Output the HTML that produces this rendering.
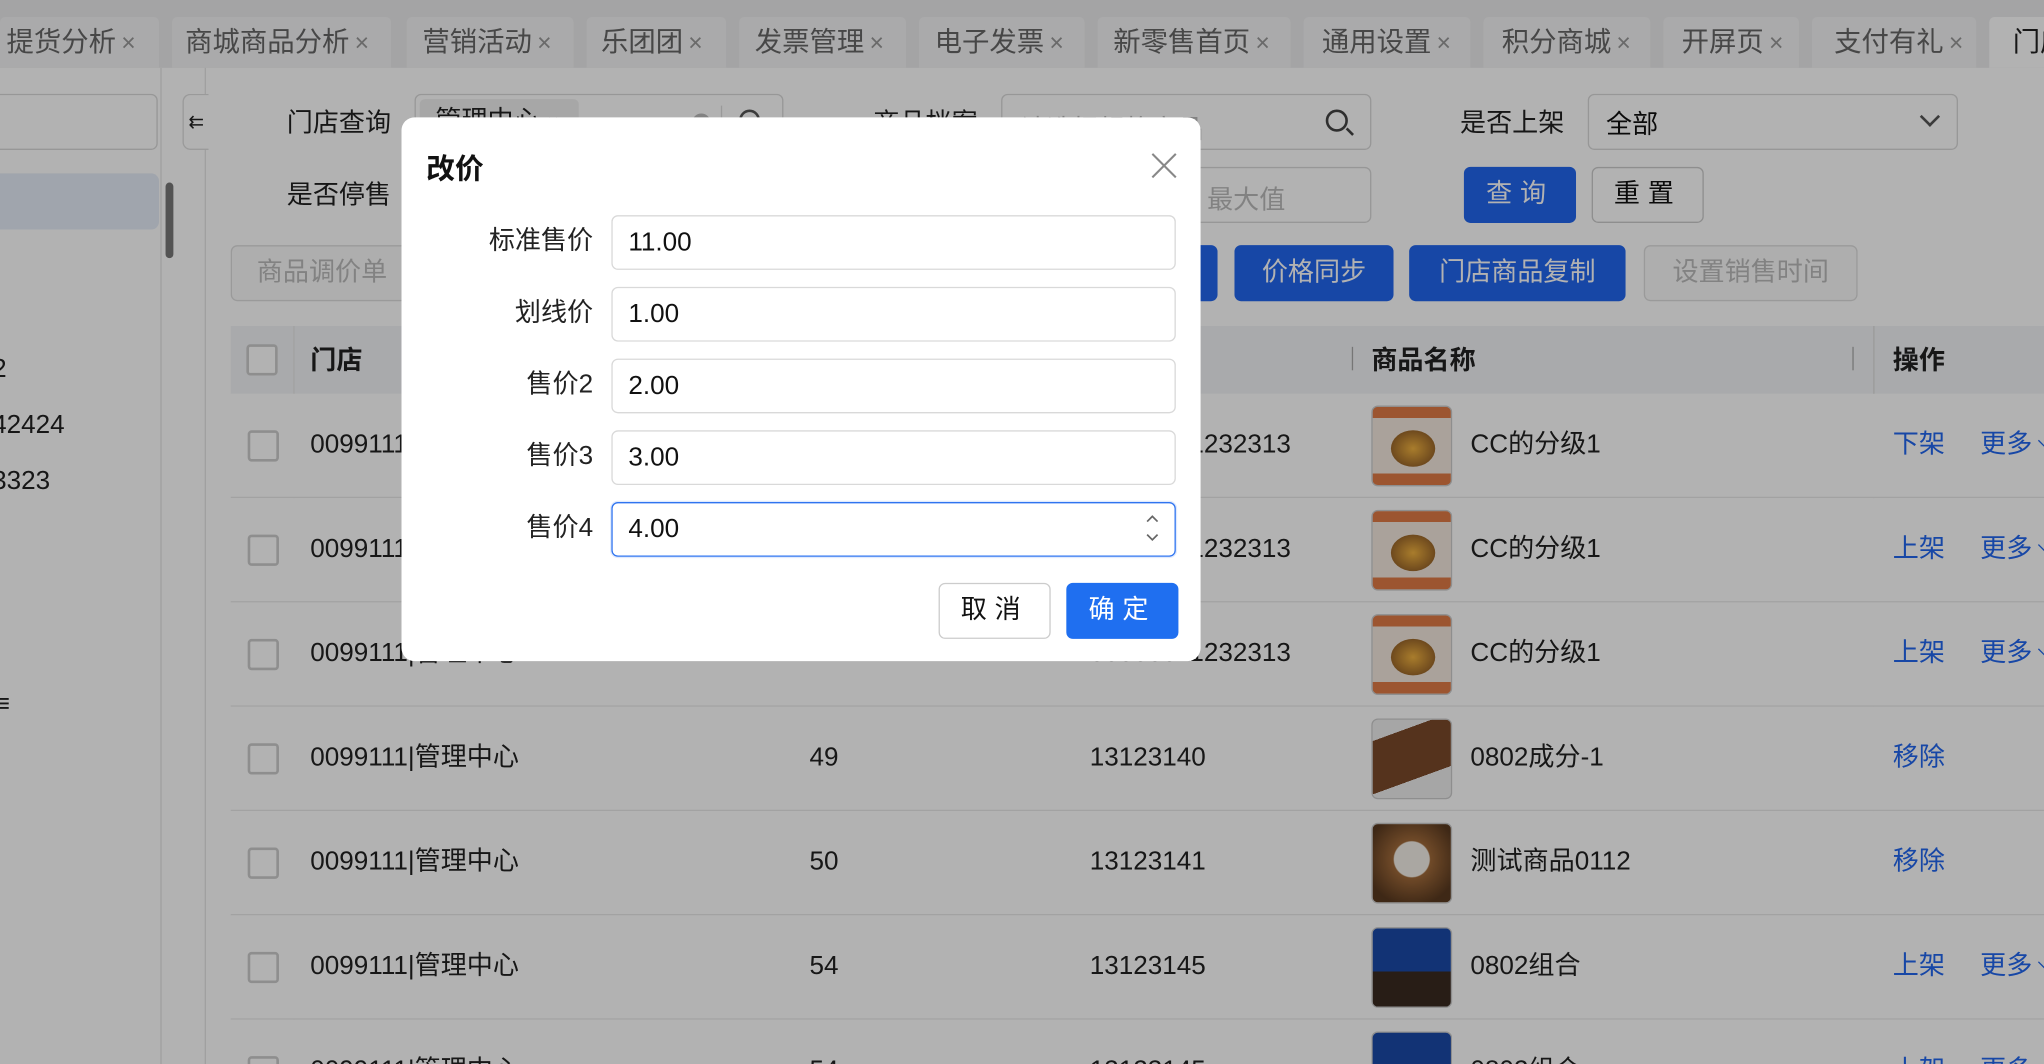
<!DOCTYPE html>
<html><head><meta charset="utf-8"><style>
*{box-sizing:border-box;margin:0;padding:0}
html,body{width:2044px;height:1064px;overflow:hidden;background:#fff;position:relative}
body{font-family:"Liberation Sans","Noto Sans CJK SC",sans-serif;color:#222}
#c{position:absolute;left:0;top:0;width:2044px;height:1064px;overflow:hidden}
#w{position:absolute;left:0;top:0;width:1568px;height:816px;transform:scale(1.30357,1.30392);transform-origin:0 0;background:#fff;overflow:hidden;font-size:20px}
.a{position:absolute;white-space:nowrap}
.tab{position:absolute;top:13px;height:39px;background:#f4f4f5;border-radius:4px 4px 0 0;color:#666;font-size:21px;line-height:39px;padding-left:6px}
.tab b{font-weight:normal;color:#999;margin-left:4px;font-size:19px}
.inp{position:absolute;border:1px solid #d9d9d9;border-radius:5px;background:#fff}
.lbl{position:absolute;font-size:20px;line-height:20px}
.btn{position:absolute;border-radius:5px;font-size:20px;text-align:center;color:#fff;background:#2266ee}
.row{position:absolute;left:177px;width:1400px;height:80px;border-bottom:1px solid #e8e8e8;background:#fff}
.cb{position:absolute;left:13px;top:28px;width:24px;height:24px;border:2px solid #ccc;border-radius:3px;background:#fff}
.row .a{top:27px;line-height:24px}
.img{position:absolute;left:875px;top:9px;width:62px;height:62px;border-radius:5px;border:1px solid #ccc;overflow:hidden}
.blue{color:#2266ee}
.more::after{content:"";display:inline-block;width:7px;height:7px;border-right:1.5px solid #2266ee;border-bottom:1.5px solid #2266ee;transform:rotate(45deg);margin-left:6px;vertical-align:5px}
#ov{position:absolute;left:0;top:0;width:1568px;height:816px;background:rgba(0,0,0,0.3)}
#m{position:absolute;left:308px;top:90px;width:613px;height:417px;background:#fff;border-radius:10px}
.mi{position:absolute;left:161px;width:433px;height:42px;border:1px solid #d9d9d9;border-radius:5px;font-size:20px;line-height:40px;padding-left:12px;color:#111}
.ml{position:absolute;width:147px;text-align:right;font-size:20px;color:#222;line-height:42px}
</style></head><body><div id="c"><div id="w">
<div class="a" style="left:0;top:0;width:1568px;height:52px;background:#ebebec"></div>
<div class="tab" style="left:0;width:122px;padding-left:5px">提货分析<b>×</b></div>
<div class="tab" style="left:132px;width:168px;padding-left:10px">商城商品分析<b>×</b></div>
<div class="tab" style="left:312px;width:128px;padding-left:12px">营销活动<b>×</b></div>
<div class="tab" style="left:450px;width:107px;padding-left:11px">乐团团<b>×</b></div>
<div class="tab" style="left:567px;width:128px;padding-left:12px">发票管理<b>×</b></div>
<div class="tab" style="left:705px;width:127px;padding-left:12px">电子发票<b>×</b></div>
<div class="tab" style="left:842px;width:148px;padding-left:12px">新零售首页<b>×</b></div>
<div class="tab" style="left:1000px;width:128px;padding-left:14px">通用设置<b>×</b></div>
<div class="tab" style="left:1138px;width:128px;padding-left:14px">积分商城<b>×</b></div>
<div class="tab" style="left:1276px;width:104px;padding-left:14px">开屏页<b>×</b></div>
<div class="tab" style="left:1390px;width:126px;padding-left:17px">支付有礼<b>×</b></div>
<div class="tab" style="left:1526px;width:60px;background:#fff;color:#222;padding-left:18px">门店</div>
<div class="a" style="left:123px;top:52px;width:1px;height:764px;background:#e5e5e5"></div>
<div class="a" style="left:157px;top:52px;width:1px;height:764px;background:#e5e5e5"></div>
<div class="inp" style="left:-10px;top:72px;width:131px;height:43px"></div>
<div class="a" style="left:0;top:133px;width:122px;height:43px;background:#e6ecf8;border-radius:0 6px 6px 0"></div>
<div class="a" style="left:127px;top:140px;width:6px;height:58px;background:#777;border-radius:3px"></div>
<div class="a" style="left:-6px;top:272px;line-height:22px">2</div>
<div class="a" style="left:-6px;top:315px;line-height:22px">42424</div>
<div class="a" style="left:-6px;top:358px;line-height:22px">3323</div>
<div class="a" style="left:-4px;top:529px;line-height:22px">≡</div>
<div class="a" style="left:140px;top:72px;width:20px;height:43px;border:1px solid #ddd;border-right:none;border-radius:6px 0 0 6px;background:#fff;font-size:14px;line-height:40px;text-align:center">⇇</div>
<div class="lbl" style="left:220px;top:85px">门店查询</div>
<div class="inp" style="left:318px;top:72px;width:283px;height:43px"><div class="a" style="left:3px;top:3px;width:122px;height:36px;background:#f0f0f0;border-radius:4px;padding-left:12px;line-height:34px">管理中心 <span style="color:#999;font-size:16px">×</span></div><div class="a" style="left:212px;top:14px;width:14px;height:14px;border-radius:7px;background:#bbb"></div><div class="a" style="left:234px;top:8px;width:1px;height:26px;background:#ddd"></div><div class="a" style="left:248px;top:11px;width:16px;height:16px;border:2px solid #555;border-radius:50%"></div></div>
<div class="lbl" style="left:670px;top:85px">商品档案</div>
<div class="inp" style="left:768px;top:72px;width:284px;height:43px"><div class="a" style="left:14px;top:10px;color:#bbb">请选择规格商品</div><div class="a" style="left:248px;top:11px;width:17px;height:17px;border:2px solid #444;border-radius:50%"></div><div class="a" style="left:263px;top:27px;width:7px;height:2px;background:#444;transform:rotate(45deg)"></div></div>
<div class="lbl" style="left:1120px;top:85px">是否上架</div>
<div class="inp" style="left:1218px;top:72px;width:284px;height:43px"><div class="a" style="left:13px;top:6px;color:#111">全部</div><div class="a" style="left:256px;top:11px;width:11px;height:11px;border-right:2px solid #555;border-bottom:2px solid #555;transform:rotate(45deg)"></div></div>
<div class="lbl" style="left:220px;top:140px">是否停售</div>
<div class="inp" style="left:900px;top:128px;width:152px;height:43px"><div class="a" style="left:25px;top:8px;color:#bbb">最大值</div></div>
<div class="btn" style="left:1123px;top:128px;width:86px;height:43px;line-height:43px;letter-spacing:6px">查询</div>
<div class="btn" style="left:1221px;top:128px;width:86px;height:43px;line-height:41px;background:#fff;color:#111;border:1px solid #ccc;letter-spacing:6px">重置</div>
<div class="btn" style="left:177px;top:188px;width:140px;height:43px;line-height:41px;background:#fafafa;color:#bbb;border:1px solid #ddd">商品调价单</div>
<div class="btn" style="left:900px;top:188px;width:34px;height:43px;border-radius:0 5px 5px 0"></div>
<div class="btn" style="left:947px;top:188px;width:122px;height:43px;line-height:43px">价格同步</div>
<div class="btn" style="left:1081px;top:188px;width:166px;height:43px;line-height:43px">门店商品复制</div>
<div class="btn" style="left:1261px;top:188px;width:164px;height:43px;line-height:41px;background:#fafafa;color:#bbb;border:1px solid #ddd">设置销售时间</div>
<div class="a" style="left:177px;top:250px;width:1400px;height:52px;background:#f3f4f6"></div>
<div class="a" style="left:189px;top:264px;width:24px;height:24px;border:2px solid #ccc;border-radius:3px;background:#fff"></div>
<div class="a" style="left:225px;top:250px;width:1px;height:566px;background:#e8e8e8"></div>
<div class="a" style="left:238px;top:260px;font-weight:bold">门店</div>
<div class="a" style="left:1037px;top:266px;width:1px;height:18px;background:#aaa"></div>
<div class="a" style="left:1052px;top:260px;font-weight:bold">商品名称</div>
<div class="a" style="left:1421px;top:266px;width:1px;height:18px;background:#aaa"></div>
<div class="a" style="left:1437px;top:250px;width:1px;height:566px;background:#ddd"></div>
<div class="a" style="left:1452px;top:260px;font-weight:bold">操作</div>
<div class="row" style="top:302px"><div class="cb"></div><div class="a" style="left:61px">0099111|管理中心</div><div class="a" style="left:444px">47</div><div class="a" style="left:659px">00000011232313</div><div class="img" style="background:linear-gradient(#e07a45 0 14%,#f4e9df 14% 85%,#e07a45 85%)"><div class="a" style="left:14px;top:18px;width:34px;height:28px;border-radius:50%;background:radial-gradient(#f2b340,#7a4a22)"></div></div><div class="a" style="left:951px">CC的分级1</div><div class="a blue" style="left:1275px">下架</div><div class="a blue more" style="left:1342px">更多</div></div>
<div class="row" style="top:382px"><div class="cb"></div><div class="a" style="left:61px">0099111|管理中心</div><div class="a" style="left:444px">47</div><div class="a" style="left:659px">00000011232313</div><div class="img" style="background:linear-gradient(#e07a45 0 14%,#f4e9df 14% 85%,#e07a45 85%)"><div class="a" style="left:14px;top:18px;width:34px;height:28px;border-radius:50%;background:radial-gradient(#f2b340,#7a4a22)"></div></div><div class="a" style="left:951px">CC的分级1</div><div class="a blue" style="left:1275px">上架</div><div class="a blue more" style="left:1342px">更多</div></div>
<div class="row" style="top:462px"><div class="cb"></div><div class="a" style="left:61px">0099111|管理中心</div><div class="a" style="left:444px">47</div><div class="a" style="left:659px">00000011232313</div><div class="img" style="background:linear-gradient(#e07a45 0 14%,#f4e9df 14% 85%,#e07a45 85%)"><div class="a" style="left:14px;top:18px;width:34px;height:28px;border-radius:50%;background:radial-gradient(#f2b340,#7a4a22)"></div></div><div class="a" style="left:951px">CC的分级1</div><div class="a blue" style="left:1275px">上架</div><div class="a blue more" style="left:1342px">更多</div></div>
<div class="row" style="top:542px"><div class="cb"></div><div class="a" style="left:61px">0099111|管理中心</div><div class="a" style="left:444px">49</div><div class="a" style="left:659px">13123140</div><div class="img" style="background:linear-gradient(160deg,#eee 0 20%,#7a4a2a 20% 70%,#eee 70%)"></div><div class="a" style="left:951px">0802成分-1</div><div class="a blue" style="left:1275px">移除</div></div>
<div class="row" style="top:622px"><div class="cb"></div><div class="a" style="left:61px">0099111|管理中心</div><div class="a" style="left:444px">50</div><div class="a" style="left:659px">13123141</div><div class="img" style="background:radial-gradient(circle at 50% 45%,#f4f0e8 0 30%,#a06a3a 32%,#5a3a20 80%)"></div><div class="a" style="left:951px">测试商品0112</div><div class="a blue" style="left:1275px">移除</div></div>
<div class="row" style="top:702px"><div class="cb"></div><div class="a" style="left:61px">0099111|管理中心</div><div class="a" style="left:444px">54</div><div class="a" style="left:659px">13123145</div><div class="img" style="background:linear-gradient(#1a4aa8 0 55%,#3a2a20 55%)"></div><div class="a" style="left:951px">0802组合</div><div class="a blue" style="left:1275px">上架</div><div class="a blue more" style="left:1342px">更多</div></div>
<div class="row" style="top:782px;height:34px;border-bottom:none"><div class="cb"></div><div class="a" style="left:61px">0099111|管理中心</div><div class="a" style="left:444px">54</div><div class="a" style="left:659px">13123145</div><div class="img" style="height:25px;border-bottom:none;border-radius:5px 5px 0 0;background:#1a4aa8"></div><div class="a" style="left:951px">0802组合</div><div class="a blue" style="left:1275px">上架</div><div class="a blue more" style="left:1342px">更多</div></div>
<div id="ov"></div>
<div id="m">
<div class="a" style="left:19px;top:22px;font-size:22px;font-weight:bold;color:#111">改价</div>
<svg class="a" style="left:574px;top:26px" width="22" height="22" viewBox="0 0 22 22"><path d="M2 2L20 20M20 2L2 20" stroke="#888" stroke-width="1.6"/></svg>
<div class="ml" style="top:74px">标准售价</div><div class="mi" style="top:75px">11.00</div>
<div class="ml" style="top:129px">划线价</div><div class="mi" style="top:130px">1.00</div>
<div class="ml" style="top:184px">售价2</div><div class="mi" style="top:185px">2.00</div>
<div class="ml" style="top:239px">售价3</div><div class="mi" style="top:240px">3.00</div>
<div class="ml" style="top:294px">售价4</div><div class="mi" style="top:295px;border-color:#2f74f0;box-shadow:0 0 0 1px rgba(47,116,240,.15)">4.00<svg class="a" style="left:408px;top:4px" width="12" height="30" viewBox="0 0 12 30"><path d="M2 10L6 6L10 10M2 20L6 24L10 20" stroke="#666" stroke-width="1.3" fill="none"/></svg></div>
<div class="btn" style="left:412px;top:357px;width:86px;height:43px;line-height:41px;background:#fff;color:#111;border:1px solid #ccc;letter-spacing:6px">取消</div>
<div class="btn" style="left:510px;top:357px;width:86px;height:43px;line-height:43px;background:#1f6ff0;letter-spacing:6px">确定</div>
</div>
</div></div></body></html>
